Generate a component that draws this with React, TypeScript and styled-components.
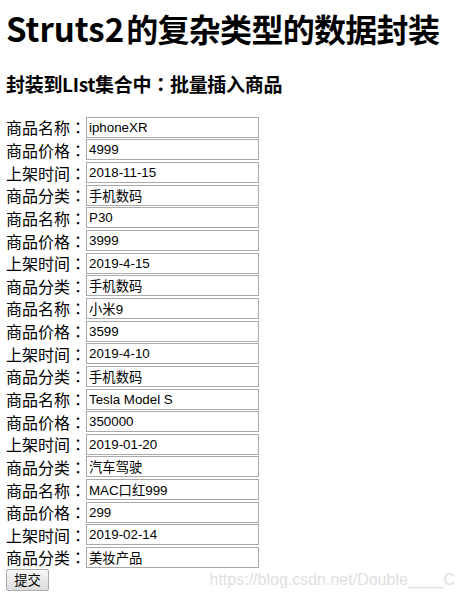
import React from 'react';
import styled, { createGlobalStyle } from 'styled-components';

const GlobalStyle = createGlobalStyle`
  html, body {
    margin: 0;
    padding: 0;
    background: #ffffff;
  }
  body {
    font-family: "Noto Sans CJK SC", "Microsoft YaHei", sans-serif;
    color: #000;
  }
`;

const Page = styled.div`
  position: relative;
  width: 463px;
  height: 599px;
  padding: 0 6px;
  box-sizing: border-box;
  overflow: hidden;
`;

const Title = styled.h1`
  margin: 0;
  padding-top: 6px;
  font-size: 32px;
  line-height: 44px;
  font-weight: 700;
  letter-spacing: -0.7px;
  white-space: nowrap;
`;

const Latin = styled.span`
  font-size: 33px;
  letter-spacing: 0;
  margin-right: 2px;
`;

const SubTitle = styled.h3`
  margin: 21px 0 0;
  font-size: 19px;
  line-height: 26px;
  font-weight: 700;
  letter-spacing: -0.3px;
  white-space: nowrap;
`;

// centred full-width colon, as in the original page
const Colon = styled.span`
  font-family: "Noto Sans CJK TC", "Noto Sans CJK SC", sans-serif;
`;

const Form = styled.form`
  margin-top: 19px;
  display: flex;
  flex-direction: column;
`;

const Row = styled.div`
  display: flex;
  align-items: center;
  height: 22.65px;
`;

const Label = styled.label`
  width: 80px;
  font-size: 16px;
  line-height: 20px;
  white-space: nowrap;
`;

const Field = styled.input`
  box-sizing: border-box;
  width: 173px;
  height: 21px;
  margin: 0;
  padding: 1px 2px;
  border: 1px solid #a9a9a9;
  border-radius: 0;
  font-family: "Liberation Sans", "Noto Sans CJK SC", sans-serif;
  font-size: 13.33px;
  color: #000;
  background: #fff;
  outline: none;
`;

const ButtonRow = styled.div`
  display: flex;
`;

const SubmitButton = styled.button`
  box-sizing: border-box;
  width: 43px;
  height: 22px;
  margin: 0;
  padding: 0;
  border: 1px solid #adadad;
  border-radius: 2px;
  background: linear-gradient(#f6f6f6, #dddddd);
  font-family: "Noto Sans CJK SC", sans-serif;
  font-size: 13.33px;
  line-height: 18px;
  color: #000;
`;

const Watermark = styled.div`
  position: absolute;
  right: 8px;
  bottom: 9px;
  font-family: "Liberation Sans", Arial, sans-serif;
  font-size: 16px;
  line-height: 20px;
  color: #e0e0e0;
  white-space: nowrap;
  pointer-events: none;
`;

const products = [
  { name: 'iphoneXR', price: '4999', date: '2018-11-15', category: '手机数码' },
  { name: 'P30', price: '3999', date: '2019-4-15', category: '手机数码' },
  { name: '小米9', price: '3599', date: '2019-4-10', category: '手机数码' },
  { name: 'Tesla Model S', price: '350000', date: '2019-01-20', category: '汽车驾驶' },
  { name: 'MAC口红999', price: '299', date: '2019-02-14', category: '美妆产品' },
];

function FieldRow({ label, value }: { label: string; value: string }) {
  return (
    <Row>
      <Label>{label}<Colon>：</Colon></Label>
      <Field type="text" defaultValue={value} />
    </Row>
  );
}

export default function App() {
  return (
    <>
      <GlobalStyle />
      <Page>
        <Title><Latin>Struts2</Latin>的复杂类型的数据封装</Title>
        <SubTitle>封装到LIst集合中<Colon>：</Colon>批量插入商品</SubTitle>
        <Form onSubmit={(e) => e.preventDefault()}>
          {products.map((p, i) => (
            <React.Fragment key={i}>
              <FieldRow label="商品名称" value={p.name} />
              <FieldRow label="商品价格" value={p.price} />
              <FieldRow label="上架时间" value={p.date} />
              <FieldRow label="商品分类" value={p.category} />
            </React.Fragment>
          ))}
          <ButtonRow>
            <SubmitButton type="submit">提交</SubmitButton>
          </ButtonRow>
        </Form>
        <Watermark>https://blog.csdn.net/Double____C</Watermark>
      </Page>
    </>
  );
}
